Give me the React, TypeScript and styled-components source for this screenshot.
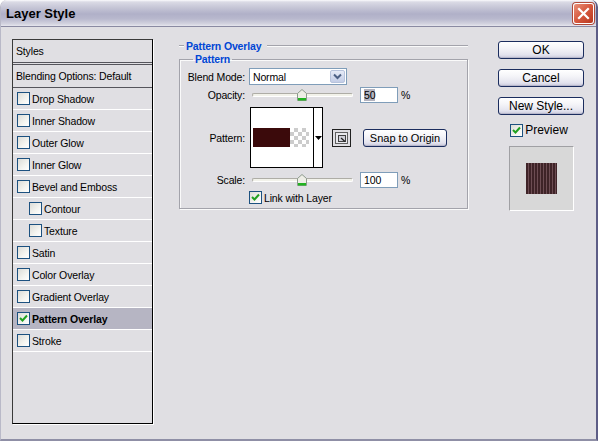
import React from 'react';
import styled, { createGlobalStyle } from 'styled-components';

const GlobalStyle = createGlobalStyle`
  html, body {
    margin: 0;
    padding: 0;
    background: #ffffff;
  }
  body {
    font-family: "Liberation Sans", Tahoma, Arial, sans-serif;
    font-size: 10.5px;
    letter-spacing: -0.15px;
    color: #000;
  }
`;

const Window = styled.div`
  width: 598px;
  height: 441px;
  box-sizing: border-box;
  background: #e0dfe3;
  border-left: 1px solid #b9b9c8;
  border-right: 2px solid #5d5d86;
  border-bottom: 2px solid #8f8fa6;
  border-radius: 7px 7px 0 0;
  display: flex;
  flex-direction: column;
  overflow: hidden;
`;

const TitleBar = styled.div`
  height: 27px;
  flex-shrink: 0;
  box-sizing: border-box;
  display: flex;
  align-items: center;
  justify-content: space-between;
  padding: 0 2px 0 5px;
  background: linear-gradient(
    to bottom,
    #fbfbfd 0px,
    #dadae5 2px,
    #c4c4d5 8px,
    #b0b0c8 14px,
    #b9b9ce 19px,
    #d4d4e0 24px,
    #e6e6ee 26px
  );
  border-bottom: 1px solid #8a8aa2;
`;

const TitleText = styled.span`
  font-family: "Liberation Sans", Arial, sans-serif;
  font-weight: bold;
  font-size: 13px;
  letter-spacing: 0;
  color: #000;
`;

const CloseButton = styled.div`
  width: 21px;
  height: 21px;
  box-sizing: border-box;
  border-radius: 3px;
  border: 1px solid #ffffff;
  background: linear-gradient(135deg, #e8907a 0%, #d6583e 50%, #b8381f 100%);
  box-shadow: 0 0 0 1px #b04a3a;
  display: flex;
  align-items: center;
  justify-content: center;
`;

const Body = styled.div`
  flex: 1;
  display: flex;
  padding: 12px 11px 0 11px;
`;

const StyleList = styled.div`
  width: 141px;
  height: 385px;
  flex-shrink: 0;
  box-sizing: border-box;
  border: 1px solid #000;
  border-top-color: #3a3a3a;
  border-left-color: #3a3a3a;
  box-shadow: 1px 1px 0 #ffffff;
  background: #e0dfe3;
  display: flex;
  flex-direction: column;
`;

const ListHeader = styled.div`
  height: 22px;
  line-height: 22px;
  padding-left: 3px;
  border-bottom: 3px double #55555c;
`;

const BlendRow = styled.div`
  height: 22px;
  line-height: 22px;
  padding-left: 3px;
  border-bottom: 1px solid #55555c;
`;

const EffectRow = styled.div<{ $indent: number; $selected?: boolean }>`
  height: 21px;
  border-bottom: 1px solid #ffffff;
  display: flex;
  align-items: center;
  gap: 2px;
  padding-left: ${p => p.$indent}px;
  background: ${p => (p.$selected ? '#b6b5c3' : 'transparent')};
  font-weight: ${p => (p.$selected ? 'bold' : 'normal')};
`;

const CheckBox = styled.span`
  width: 13px;
  height: 13px;
  box-sizing: border-box;
  flex-shrink: 0;
  border: 1px solid #1c5180;
  background: linear-gradient(135deg, #dcdcd7 0%, #f4f4f0 60%, #ffffff 100%);
  display: inline-flex;
  align-items: center;
  justify-content: center;
`;

const Middle = styled.div`
  width: 289px;
  flex-shrink: 0;
  margin-left: 26px;
  display: flex;
  flex-direction: column;
`;

const SectionHeader = styled.div`
  height: 14px;
  display: flex;
  align-items: center;
  gap: 2px;
`;

const HeaderLine = styled.span<{ $grow?: boolean }>`
  height: 0;
  border-top: 1px solid #a3a3ab;
  border-bottom: 1px solid #fafafa;
  width: ${p => (p.$grow ? 'auto' : '5px')};
  flex: ${p => (p.$grow ? 1 : 'none')};
  margin-left: ${p => (p.$grow ? '4px' : '0')};
`;

const BlueTitle = styled.span`
  color: #0046d5;
  font-weight: bold;
`;

const GroupBox = styled.fieldset`
  margin: 0;
  padding: 2px 0 4px 0;
  border: 1px solid #a3a3ab;
  box-shadow: inset 1px 1px 0 #fafafa, 1px 1px 0 #fafafa;
  min-width: 0;
`;

const GroupLegend = styled.legend`
  margin-left: 13px;
  padding: 0 2px;
  color: #0046d5;
  font-weight: bold;
  line-height: 13px;
`;

const FieldRow = styled.div<{ $mt: number }>`
  display: grid;
  grid-template-columns: 65px auto;
  column-gap: 4px;
  align-items: center;
  margin-top: ${p => p.$mt}px;
`;

const FieldLabel = styled.span`
  text-align: right;
`;

const Controls = styled.div`
  display: flex;
  align-items: center;
`;

const Select = styled.div`
  width: 98px;
  height: 17px;
  box-sizing: border-box;
  border: 1px solid #7f9db9;
  background: #fff;
  display: flex;
  align-items: center;
  justify-content: space-between;
  padding: 0 1px 0 3px;
`;

const SelectButton = styled.span`
  width: 15px;
  height: 13px;
  box-sizing: border-box;
  border: 1px solid #b7c3dc;
  border-radius: 2px;
  background: linear-gradient(to bottom, #e6ebf7, #c3cde6);
  display: inline-flex;
  align-items: center;
  justify-content: center;
`;

const Slider = styled.div`
  position: relative;
  width: 101px;
  height: 16px;
  margin-left: 3px;
  display: flex;
  align-items: center;
`;

const Track = styled.div`
  width: 100%;
  height: 4px;
  box-sizing: border-box;
  border: 1px solid #aeada6;
  border-bottom-color: #ffffff;
  border-right-color: #ffffff;
  border-radius: 2px;
  background: #f2f2ea;
`;

const Thumb = styled.svg`
  position: absolute;
  left: 45px;
  top: 2px;
`;

const NumberInput = styled.div`
  width: 38px;
  height: 16px;
  box-sizing: border-box;
  margin-left: 7px;
  border: 1px solid #7f9db9;
  background: #fff;
  display: flex;
  align-items: center;
  padding-left: 3px;
`;

const Highlight = styled.span`
  background: #b3b3bf;
  line-height: 12px;
`;

const Percent = styled.span`
  margin-left: 3px;
`;

const PatternPicker = styled.div`
  width: 73px;
  height: 61px;
  box-sizing: border-box;
  margin-left: 1px;
  border: 1px solid #000;
  background: #fff;
  display: flex;
`;

const SwatchArea = styled.div`
  width: 60px;
  display: flex;
  align-items: center;
  padding-left: 2px;
`;

const DarkSwatch = styled.div`
  width: 37px;
  height: 19px;
  background: #3b0a0b;
`;

const CheckerSwatch = styled.div`
  width: 19px;
  height: 19px;
  background-color: #ffffff;
  background-image: repeating-conic-gradient(#cccccc 0 25%, #ffffff 0 50%);
  background-size: 8px 8px;
`;

const PickerArrow = styled.div`
  flex: 1;
  border-left: 1px solid #000;
  display: flex;
  align-items: center;
  justify-content: center;
`;

const IconButton = styled.div`
  width: 19px;
  height: 18px;
  margin-left: 9px;
  box-sizing: border-box;
  border: 1px solid #202020;
  background: #e0dfe3;
  display: flex;
  align-items: center;
  justify-content: center;
`;

const XPButton = styled.div<{ $w: number }>`
  width: ${p => p.$w}px;
  height: 18px;
  box-sizing: border-box;
  border: 1px solid #1b2d5e;
  border-radius: 3px;
  background: linear-gradient(to bottom, #ffffff 0%, #f4f4f8 40%, #e3e3ee 80%, #c8c8da 100%);
  box-shadow: inset 0 -1px 0 #b8b8cc;
  display: flex;
  align-items: center;
  justify-content: center;
  font-size: 12px;
  letter-spacing: 0;
`;

const SnapButton = styled(XPButton)`
  margin-left: 12px;
  font-size: 11px;
`;

const CheckLabel = styled.label`
  display: flex;
  align-items: center;
  gap: 2px;
`;

const RightColumn = styled.div`
  width: 86px;
  flex-shrink: 0;
  margin-left: 30px;
  padding-top: 2px;
  display: flex;
  flex-direction: column;
  align-items: center;
  gap: 10px;
`;

const PreviewLabel = styled(CheckLabel)`
  margin-top: -2px;
  font-size: 12px;
  letter-spacing: 0;
  margin-right: 4px;
`;

const PreviewBox = styled.div`
  width: 65px;
  height: 65px;
  box-sizing: border-box;
  margin-top: -1px;
  border: 1px solid #ffffff;
  border-top-color: #a0a0a4;
  border-left-color: #a0a0a4;
  background: #d8d8d8;
  display: flex;
  align-items: center;
  justify-content: center;
`;

const PreviewPattern = styled.div`
  width: 31px;
  height: 31px;
  margin-left: 1px;
  background: repeating-linear-gradient(
    90deg,
    #3e2327 0px,
    #3e2327 2px,
    #6d4d53 2px,
    #6d4d53 3px
  );
`;

const GreenCheck = () => (
  <svg width="9" height="9" viewBox="0 0 9 9">
    <path d="M1 4 L3.5 6.5 L8 1.5" stroke="#21a121" strokeWidth="2" fill="none" />
  </svg>
);

const SliderThumb = () => (
  <Thumb width="10" height="12" viewBox="0 0 10 12">
    <path d="M0.5 4.5 L5 0.5 L9.5 4.5 L9.5 11.5 L0.5 11.5 Z" fill="#eeeee6" stroke="#8c9a8c" />
    <rect x="1" y="9" width="8" height="2.5" fill="#21b321" />
  </Thumb>
);

type Effect = { name: string; indent: number; checked?: boolean; selected?: boolean };

const effects: Effect[] = [
  { name: 'Drop Shadow', indent: 4 },
  { name: 'Inner Shadow', indent: 4 },
  { name: 'Outer Glow', indent: 4 },
  { name: 'Inner Glow', indent: 4 },
  { name: 'Bevel and Emboss', indent: 4 },
  { name: 'Contour', indent: 16 },
  { name: 'Texture', indent: 16 },
  { name: 'Satin', indent: 4 },
  { name: 'Color Overlay', indent: 4 },
  { name: 'Gradient Overlay', indent: 4 },
  { name: 'Pattern Overlay', indent: 4, checked: true, selected: true },
  { name: 'Stroke', indent: 4 },
];

export default function App() {
  return (
    <>
      <GlobalStyle />
      <Window>
        <TitleBar>
          <TitleText>Layer Style</TitleText>
          <CloseButton>
            <svg width="13" height="13" viewBox="0 0 13 13">
              <path d="M2 2 L11 11 M11 2 L2 11" stroke="#ffffff" strokeWidth="2.2" strokeLinecap="square" />
            </svg>
          </CloseButton>
        </TitleBar>

        <Body>
          <StyleList>
            <ListHeader>Styles</ListHeader>
            <BlendRow>Blending Options: Default</BlendRow>
            {effects.map(e => (
              <EffectRow key={e.name} $indent={e.indent} $selected={e.selected}>
                <CheckBox>{e.checked && <GreenCheck />}</CheckBox>
                {e.name}
              </EffectRow>
            ))}
          </StyleList>

          <Middle>
            <SectionHeader>
              <HeaderLine />
              <BlueTitle>Pattern Overlay</BlueTitle>
              <HeaderLine $grow />
            </SectionHeader>

            <GroupBox>
              <GroupLegend>Pattern</GroupLegend>

              <FieldRow $mt={0}>
                <FieldLabel>Blend Mode:</FieldLabel>
                <Controls>
                  <Select>
                    Normal
                    <SelectButton>
                      <svg width="9" height="7" viewBox="0 0 9 7">
                        <path d="M1 1.5 L4.5 5 L8 1.5" stroke="#4d6185" strokeWidth="2" fill="none" />
                      </svg>
                    </SelectButton>
                  </Select>
                </Controls>
              </FieldRow>

              <FieldRow $mt={2}>
                <FieldLabel>Opacity:</FieldLabel>
                <Controls>
                  <Slider>
                    <Track />
                    <SliderThumb />
                  </Slider>
                  <NumberInput>
                    <Highlight>50</Highlight>
                  </NumberInput>
                  <Percent>%</Percent>
                </Controls>
              </FieldRow>

              <FieldRow $mt={4}>
                <FieldLabel>Pattern:</FieldLabel>
                <Controls>
                  <PatternPicker>
                    <SwatchArea>
                      <DarkSwatch />
                      <CheckerSwatch />
                    </SwatchArea>
                    <PickerArrow>
                      <svg width="7" height="4" viewBox="0 0 7 4">
                        <path d="M0 0 L7 0 L3.5 4 Z" fill="#000" />
                      </svg>
                    </PickerArrow>
                  </PatternPicker>
                  <IconButton>
                    <svg width="13" height="12" viewBox="0 0 13 12">
                      <rect x="0.5" y="0.5" width="12" height="11" fill="#e8e8ec" stroke="#606060" />
                      <rect x="3.5" y="3.5" width="7" height="6" fill="#d0d0d8" stroke="#404040" />
                      <path d="M6 6 L10 9.5" stroke="#202020" strokeWidth="1.2" />
                    </svg>
                  </IconButton>
                  <SnapButton $w={84}>Snap to Origin</SnapButton>
                </Controls>
              </FieldRow>

              <FieldRow $mt={4}>
                <FieldLabel>Scale:</FieldLabel>
                <Controls>
                  <Slider>
                    <Track />
                    <SliderThumb />
                  </Slider>
                  <NumberInput>100</NumberInput>
                  <Percent>%</Percent>
                </Controls>
              </FieldRow>

              <FieldRow $mt={3}>
                <span />
                <CheckLabel>
                  <CheckBox>
                    <GreenCheck />
                  </CheckBox>
                  Link with Layer
                </CheckLabel>
              </FieldRow>
            </GroupBox>
          </Middle>

          <RightColumn>
            <XPButton $w={86}>OK</XPButton>
            <XPButton $w={86}>Cancel</XPButton>
            <XPButton $w={86}>New Style...</XPButton>
            <PreviewLabel>
              <CheckBox>
                <GreenCheck />
              </CheckBox>
              Preview
            </PreviewLabel>
            <PreviewBox>
              <PreviewPattern />
            </PreviewBox>
          </RightColumn>
        </Body>
      </Window>
    </>
  );
}
